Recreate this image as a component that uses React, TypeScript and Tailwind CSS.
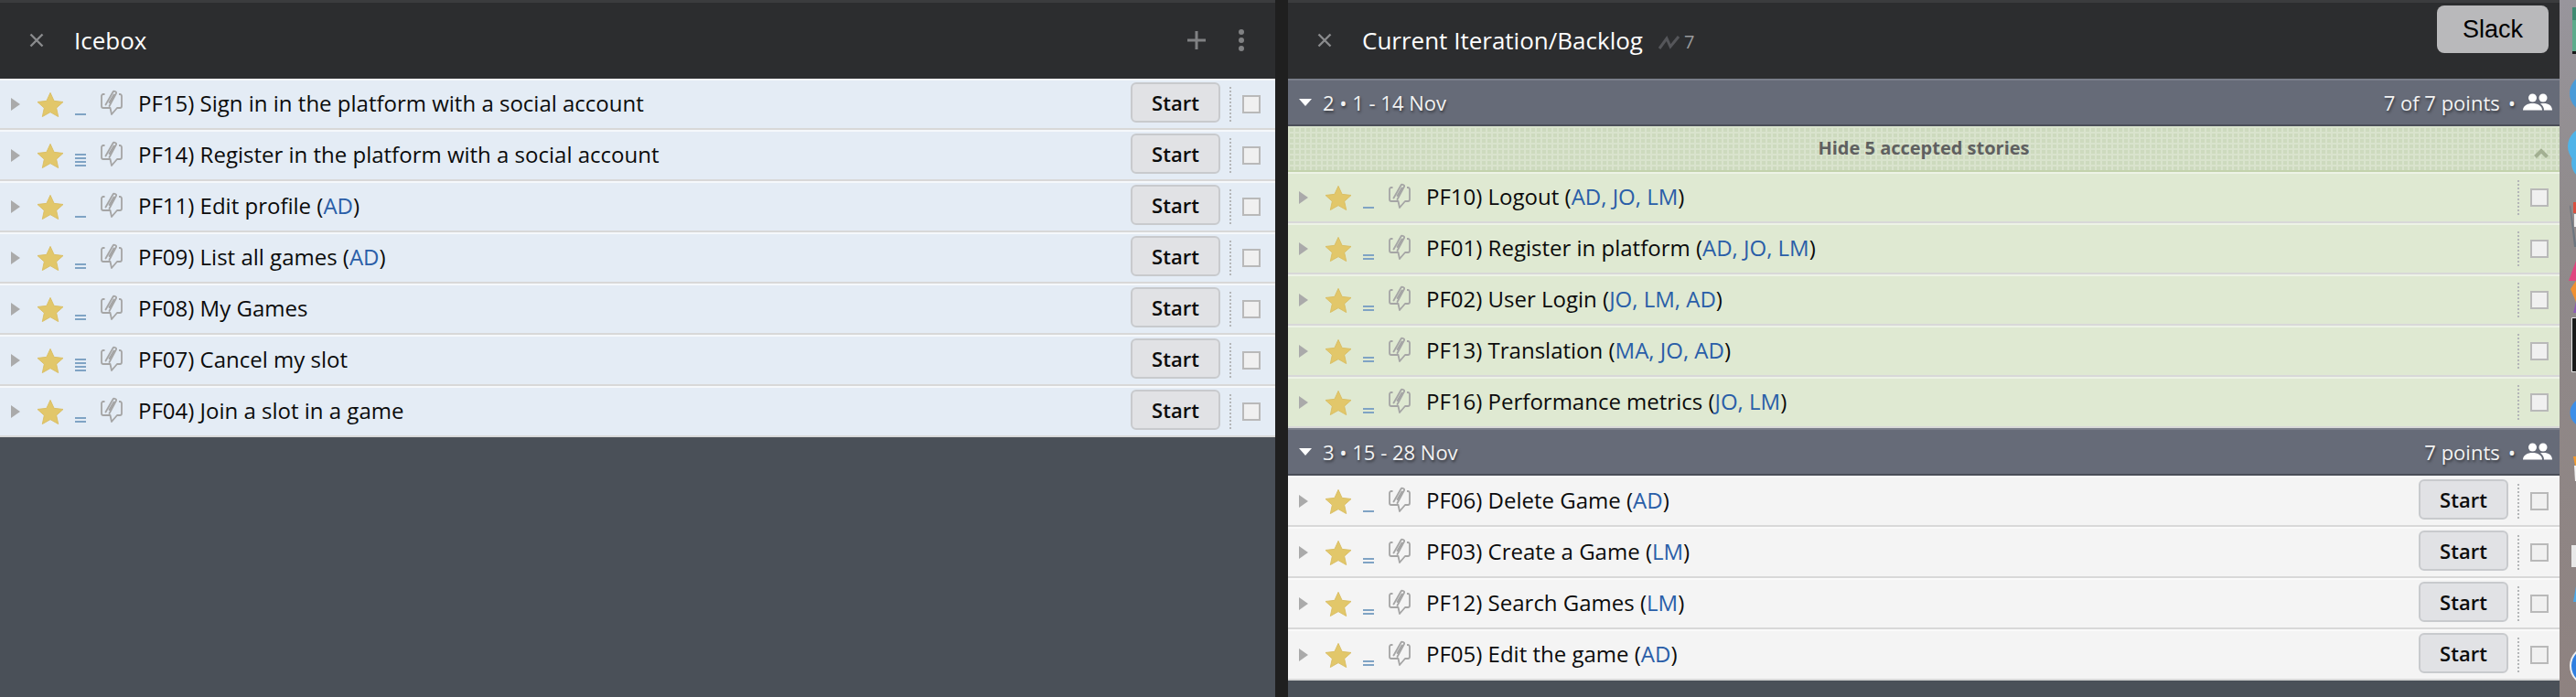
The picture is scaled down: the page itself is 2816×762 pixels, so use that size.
import React from 'react';

type Story = { id: string; title: string; owners?: string; points: 0 | 1 | 2 | 3 };
type Variant = 'icebox' | 'accepted' | 'backlog';

const icebox: Story[] = [
  { id: 'PF15', title: 'Sign in in the platform with a social account', points: 0 },
  { id: 'PF14', title: 'Register in the platform with a social account', points: 3 },
  { id: 'PF11', title: 'Edit profile', owners: 'AD', points: 0 },
  { id: 'PF09', title: 'List all games', owners: 'AD', points: 1 },
  { id: 'PF08', title: 'My Games', points: 1 },
  { id: 'PF07', title: 'Cancel my slot', points: 3 },
  { id: 'PF04', title: 'Join a slot in a game', points: 1 },
];

const accepted: Story[] = [
  { id: 'PF10', title: 'Logout', owners: 'AD, JO, LM', points: 0 },
  { id: 'PF01', title: 'Register in platform', owners: 'AD, JO, LM', points: 1 },
  { id: 'PF02', title: 'User Login', owners: 'JO, LM, AD', points: 1 },
  { id: 'PF13', title: 'Translation', owners: 'MA, JO, AD', points: 1 },
  { id: 'PF16', title: 'Performance metrics', owners: 'JO, LM', points: 1 },
];

const backlog: Story[] = [
  { id: 'PF06', title: 'Delete Game', owners: 'AD', points: 0 },
  { id: 'PF03', title: 'Create a Game', owners: 'LM', points: 1 },
  { id: 'PF12', title: 'Search Games', owners: 'LM', points: 1 },
  { id: 'PF05', title: 'Edit the game', owners: 'AD', points: 1 },
];

const Star = () => (
  <svg width="30" height="28" viewBox="0 0 32 30" className="shrink-0">
    <path d="M16 1.500l4.400 9.600 10.600 1.200-7.900 7.100 2.200 10.100L16 24.200 6.700 29.500l2.200-10.100L1 12.300l10.600-1.200z" fill="#e2c76a" stroke="#d9bd62" strokeWidth="1" strokeLinejoin="round" />
  </svg>
);

const Estimate = ({ points }: { points: number }) => {
  const lines = points === 0 ? 1 : points === 1 ? 2 : 4;
  return (
    <div className="w-3 h-[24px] shrink-0 flex flex-col justify-end gap-[2px]">
      {Array.from({ length: lines }).map((_, i) => (
        <div key={i} className="h-[2px] w-3 bg-[#7fa3c4]" />
      ))}
    </div>
  );
};

const CommentIcon = () => (
  <svg width="24" height="28" viewBox="0 0 24 28" fill="none" stroke="#a5a5a5" strokeWidth="1.800" className="shrink-0 -mt-1">
    <path d="M4.500 5H3C1.800 5 1 5.800 1 7v11c0 1.200.8 2 2 2h7.500l1.500 7 6-7h3c1.200 0 2-.8 2-2V7c0-1.200-.8-2-2-2h-1" strokeLinejoin="round" />
    <path d="M5.500 16.500L13.500 2.500c.9-1.600 4.400-.2 3.500 1.500L9.500 18M9.500 14L14.500 5.500" strokeLinecap="round" />
  </svg>
);

const StoryRow = ({ story, variant, start }: { story: Story; variant: Variant; start: boolean }) => {
  const bg =
    variant === 'icebox'
      ? 'bg-[#e4ecf5] border-t-[#f5f8fb] pr-[4px]'
      : variant === 'accepted'
        ? 'bg-[#dfe9d2] border-t-[#edf3e6]'
        : 'bg-[#f4f4f4] border-t-[#fafafa]';
  return (
    <div className={`${bg} h-[56px] border-t-2 border-b-2 border-b-[#d8d8d8] flex items-center shrink-0`}>
      <div className="w-0 h-0 ml-[12px] border-y-[7px] border-y-transparent border-l-[10px] border-l-[#aaaaaa] shrink-0" />
      <div className="ml-[18px] flex"><Star /></div>
      <div className="ml-[12px]"><Estimate points={story.points} /></div>
      <div className="ml-[16px] flex"><CommentIcon /></div>
      <div className="ml-[17px] flex-1 text-[24px] leading-[30px] text-[#0b0b0b] font-['Open_Sans',sans-serif] whitespace-nowrap -mt-[2px]">
        {story.id}) {story.title}
        {story.owners && (
          <>
            {' ('}
            <span className="text-[#2a5ea8]">{story.owners}</span>)
          </>
        )}
      </div>
      {start && (
        <button className="w-[98px] h-[44px] rounded-[6px] border-2 border-[#c8cacd] bg-[#e1e2e5] text-[22px] font-semibold text-[#0b0b0b] font-['Open_Sans',sans-serif] -mt-[4px]">
          Start
        </button>
      )}
      <div className="ml-[10px] h-[38px] border-l-2 border-dotted border-[#b4b6b8] shrink-0" />
      <div className="ml-[12px] mr-[12px] w-5 h-5 border-2 border-[#b9b9b9] bg-[#f0f0f0] shrink-0" />
    </div>
  );
};

const People = () => (
  <svg width="32" height="20" viewBox="0 0 32 20" fill="#ffffff" className="shrink-0">
    <circle cx="10.500" cy="5" r="4.500" />
    <circle cx="22" cy="5" r="4.500" />
    <path d="M0 18.500C0 13.500 5 11 10.500 11S21 13.500 21 18.500z" />
    <path d="M19 11.500c6-1.500 13 .5 13 7h-9c0-3-1.500-5.500-4-7z" />
  </svg>
);

const IterationHeader = ({ label, points }: { label: string; points: string }) => (
  <div className="h-[52px] bg-[#666b78] border-t-2 border-t-[#7a7e8a] border-b-2 border-b-[#4a4e58] flex items-center pl-[12px] pr-[8px] text-[#f2f2f2] font-['Open_Sans',sans-serif] text-[22px] [text-shadow:1px_2px_3px_rgba(0,0,0,0.5)] shrink-0">
    <div className="w-0 h-0 border-x-[7px] border-x-transparent border-t-[8px] border-t-white" />
    <span className="ml-[12px]">{label}</span>
    <span className="ml-auto">{points}</span>
    <span className="ml-[9px] mr-[8px]">•</span>
    <People />
  </div>
);

const PanelHeader = ({ children }: { children: React.ReactNode }) => (
  <div className="h-[86px] border-t-[3px] border-[#3b3c3e] bg-[#2c2d2f] flex items-center shrink-0 pb-px pl-[32px] pr-[34px] font-['Open_Sans',sans-serif] text-white relative">
    {children}
  </div>
);

const CloseIcon = () => (
  <svg width="16" height="16" viewBox="0 0 16 16" stroke="#8a8b8d" strokeWidth="2.400" className="shrink-0">
    <path d="M1.500 1.500l13 13M14.500 1.500l-13 13" />
  </svg>
);

// the bit of the desktop dock that shows past the browser window
const DockEdge = () => (
  <svg width="18" height="762" viewBox="0 0 18 762" className="block">
    <defs>
      <linearGradient id="dock" x1="0" y1="0" x2="0" y2="1">
        <stop offset="0" stopColor="#98959c" />
        <stop offset="0.3" stopColor="#908b8c" />
        <stop offset="1" stopColor="#8e8280" />
      </linearGradient>
    </defs>
    <rect width="18" height="762" fill="url(#dock)" />
    <rect x="14" y="8" width="4" height="50" rx="1" fill="#5dab8c" />
    <rect x="14" y="8" width="4" height="14" fill="#3f8a72" />
    <rect x="14" y="56" width="4" height="3" fill="#1a1a1a" />
    <circle cx="32" cy="102" r="21" fill="#4a9bd8" />
    <circle cx="30" cy="160" r="21" fill="#4fb3e8" />
    <circle cx="32" cy="178" r="19" fill="#4fb3e8" />
    <path d="M12 224l6 42v4h-2l-5-44z" fill="#6d7680" />
    <rect x="15" y="221" width="3" height="12" fill="#d9503f" />
    <rect x="16" y="234" width="2" height="14" fill="#eeeeee" />
    <path d="M18 285v22H10z" fill="#e0457f" />
    <path d="M18 307v23l-6-14z" fill="#f09030" />
    <path d="M18 330v12h-3z" fill="#8c5bb5" />
    <rect x="13" y="347" width="5" height="60" rx="1" fill="#e8e8e8" />
    <rect x="14" y="348" width="4" height="58" fill="#1a1a1a" />
    <circle cx="27" cy="451" r="15.500" fill="#3d8fe8" />
    <path d="M15 499h3v10h-1z" fill="#f09a30" />
    <path d="M16 509h2v17h-1z" fill="#f2f2f2" />
    <rect x="13" y="596" width="5" height="24" fill="#e8e8e8" />
    <path d="M18 641v17h-3z" fill="#4aa8e8" />
    <circle cx="33" cy="728" r="22" fill="#f0f0f0" />
    <circle cx="33" cy="728" r="20" fill="#2f7fe0" />
  </svg>
);

const App = () => {
  return (
    <div className="w-[2816px] h-[762px] overflow-hidden flex bg-[#1f1f1f]">
      <div className="w-[1394px] flex flex-col bg-[#4a5058] shrink-0">
        <PanelHeader>
          <CloseIcon />
          <span className="ml-[33px] text-[26px]">Icebox</span>
          <svg width="20" height="20" viewBox="0 0 20 20" stroke="#808183" strokeWidth="3" className="ml-auto">
            <path d="M10 0v20M0 10h20" />
          </svg>
          <div className="ml-[36px] flex flex-col gap-[3px]">
            <div className="w-[6px] h-[6px] rounded-full bg-[#808183]" />
            <div className="w-[6px] h-[6px] rounded-full bg-[#808183]" />
            <div className="w-[6px] h-[6px] rounded-full bg-[#808183]" />
          </div>
        </PanelHeader>
        {icebox.map((s) => (
          <StoryRow key={s.id} story={s} variant="icebox" start />
        ))}
      </div>

      <div className="w-[14px] shrink-0" />

      <div className="w-[1390px] flex flex-col bg-[#4a5058] shrink-0">
        <PanelHeader>
          <CloseIcon />
          <span className="ml-[33px] text-[26px]">Current Iteration/Backlog</span>
          <svg width="23" height="15" viewBox="0 0 23 15" fill="none" stroke="#55565a" strokeWidth="3" className="ml-[17px] mt-[5px]">
            <path d="M1 14L9 3l4 9L22 1" />
          </svg>
          <span className="ml-[5px] mt-[4px] text-[20px] text-[#9a9b9d]">7</span>
          <div className="absolute top-[3px] right-[12px] w-[122px] h-[52px] rounded-[8px] bg-[#b9b9bb] flex items-center justify-center text-black text-[27px] font-['Liberation_Sans',sans-serif]">
            Slack
          </div>
        </PanelHeader>

        <IterationHeader label="2 • 1 - 14 Nov" points="7 of 7 points" />
        <div className="h-[50px] shrink-0 bg-[linear-gradient(#d9e3cd_2px,transparent_2px),linear-gradient(90deg,#d9e3cd_2px,#cddabe_2px)] bg-[length:6px_6px] flex items-center justify-center relative text-[20px] font-bold text-[#5f6060] font-['Open_Sans',sans-serif] border-b-2 border-[#c3d2ac]">
          Hide 5 accepted stories
          <svg width="16" height="11" viewBox="0 0 16 11" fill="none" stroke="#a3b092" strokeWidth="4" className="absolute right-[12px] top-[24px]">
            <path d="M1.500 9.500L8 3l6.500 6.500" />
          </svg>
        </div>
        {accepted.map((s) => (
          <StoryRow key={s.id} story={s} variant="accepted" start={false} />
        ))}

        <IterationHeader label="3 • 15 - 28 Nov" points="7 points" />
        {backlog.map((s) => (
          <StoryRow key={s.id} story={s} variant="backlog" start />
        ))}
      </div>

      <div className="flex-1">
        <DockEdge />
      </div>
    </div>
  );
};

export default App;
